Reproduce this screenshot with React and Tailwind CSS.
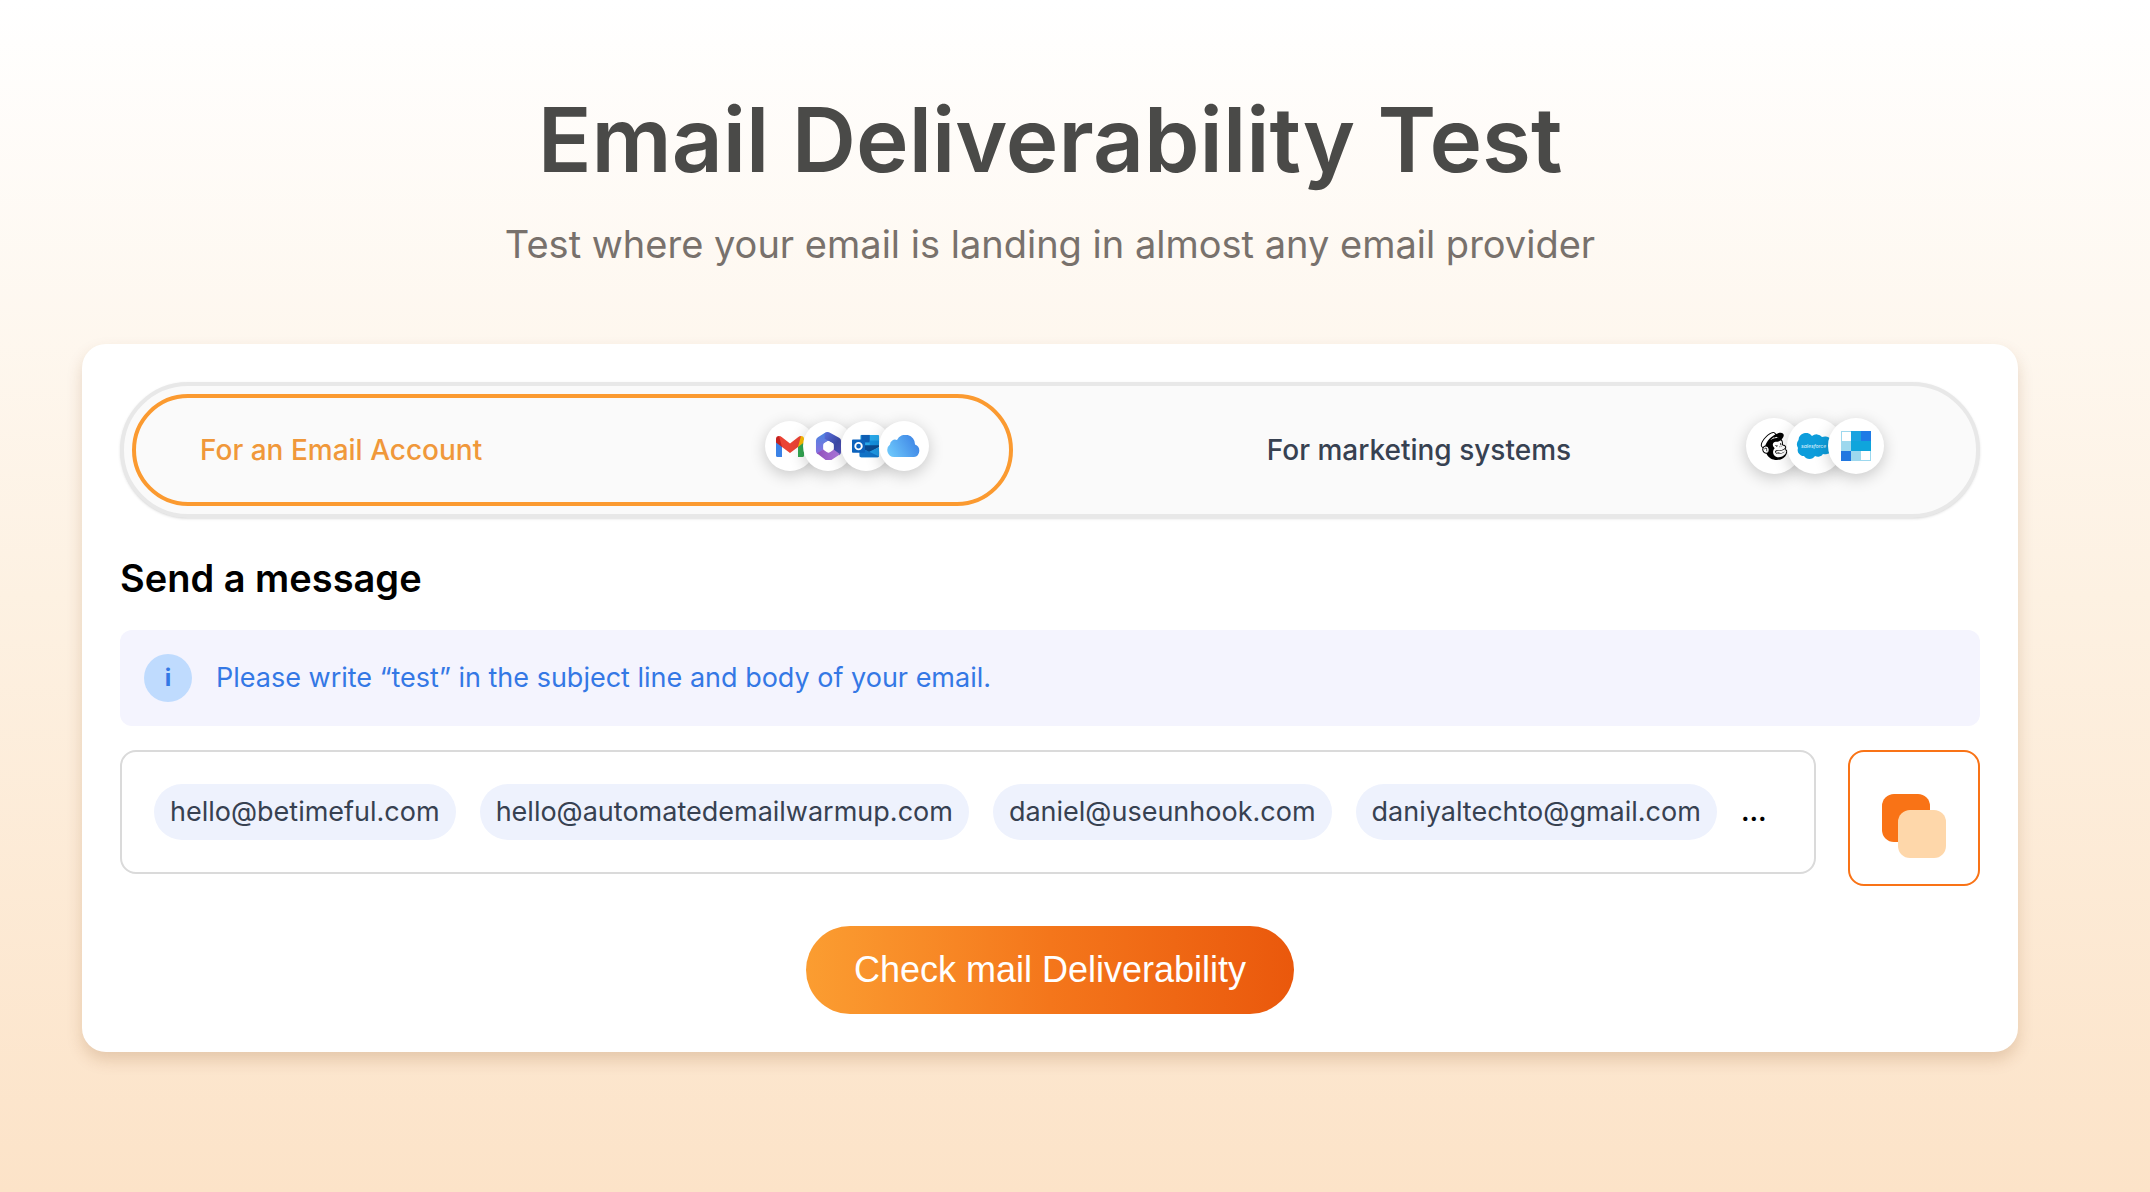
import { useState } from 'react';
import { FaMailchimp } from 'react-icons/fa';

const emails = [
  'hello@betimeful.com',
  'hello@automatedemailwarmup.com',
  'daniel@useunhook.com',
  'daniyaltechto@gmail.com',
];

function GmailLogo() {
  return (
    <svg viewBox="0 0 28 21" className="w-7" aria-hidden="true">
      <path fill="#3b82e6" d="M0 3v16.500q0 1.500 1.500 1.500H6V7z" />
      <path fill="#34a853" d="M28 3v16.500q0 1.500-1.500 1.500H22V7z" />
      <path fill="#fbbc04" d="M22 2v9l6-4.500V3q0-3-3-3z" />
      <path fill="#c5221f" d="M6 2v9L0 6.500V3q0-3 3-3z" />
      <path fill="#ea4335" d="M3 0q1.500 0 3 1.200L14 7.500l8-6.300Q23.500 0 25 0L22 11l-8 6-8-6z" />
    </svg>
  );
}

function OfficeLogo() {
  return (
    <svg viewBox="0 0 28 30" className="w-[27px]" aria-hidden="true">
      <defs>
        <linearGradient id="officeTop" x1="0" y1="0" x2="1" y2="1">
          <stop offset="0" stopColor="#5a6fdc" />
          <stop offset="0.600" stopColor="#3c4aa8" />
          <stop offset="1" stopColor="#5a55c0" />
        </linearGradient>
        <linearGradient id="officeLeft" x1="0" y1="0" x2="0" y2="1">
          <stop offset="0" stopColor="#4a86e0" />
          <stop offset="1" stopColor="#8a6fe0" />
        </linearGradient>
        <linearGradient id="officeBottom" x1="0" y1="0" x2="1" y2="0">
          <stop offset="0" stopColor="#8f4fb8" />
          <stop offset="1" stopColor="#b07be0" />
        </linearGradient>
      </defs>
      <path fill="url(#officeLeft)" d="M14 1Q12 0 10 1L3 5.500Q1 7 1 9v11q0 2 2 3l6-5v-6l8-5z" />
      <path fill="url(#officeTop)" d="M10 1q3-2 6 0l9 5q2 1 2 3v12q0 2-2 3l-6-5v-7l-9-5z" />
      <path fill="url(#officeBottom)" d="M2 22l7-4 5 3 5-3 7 5-9 6q-3 2-6 0z" />
      <path fill="#fff" d="M12.500 10q1.500-1 3 0l3 2q1 .7 1 2v3q0 1.200-1 2l-3 2q-1.500 1-3 0l-3-2q-1-.8-1-2v-3q0-1.300 1-2z" />
    </svg>
  );
}

function OutlookLogo() {
  return (
    <svg viewBox="0 0 30 26" className="w-7" aria-hidden="true">
      <rect x="9" y="1" width="20" height="13" rx="1" fill="#28a8ea" />
      <path fill="#0f5fb4" d="M10 1h9v8h-9z" />
      <path fill="#1490df" d="M19 7h10v7H19z" />
      <path fill="#0a4a90" d="M8 12h21v2l-10 6-11-6z" />
      <path fill="#1f9ae6" d="M8 24l21-10v9q0 2-2 2H10z" />
      <path fill="#1173c7" d="M8 14l21 10q-1 1-2 1H10q-2 0-2-2z" />
      <rect y="6" width="14" height="14" rx="1" fill="#0d63bd" />
      <circle cx="7" cy="13" r="3.500" fill="none" stroke="#fff" strokeWidth="2" />
    </svg>
  );
}

function CloudLogo() {
  return (
    <svg viewBox="0 0 34 22" className="w-[34px]" aria-hidden="true">
      <defs>
        <linearGradient id="cloudFill" x1="0" y1="0.700" x2="1" y2="0.300">
          <stop offset="0" stopColor="#6cc6fb" />
          <stop offset="1" stopColor="#3c82e4" />
        </linearGradient>
      </defs>
      <path
        fill="url(#cloudFill)"
        d="M7 22a7 7 0 0 1-4-12.500A5 5 0 0 1 10 5a9.500 9.500 0 0 1 18 4.500A6.500 6.500 0 0 1 27 22z"
      />
    </svg>
  );
}

function MailchimpLogo() {
  return <FaMailchimp className="size-8 text-black" aria-hidden="true" />;
}

function SalesforceLogo() {
  return (
    <svg viewBox="0 0 38 27" className="w-[38px]" aria-hidden="true">
      <path
        fill="#0d9ddb"
        d="M16 3a7 7 0 0 1 10 1 8 8 0 0 1 11 8 8 8 0 0 1-10 9 6 6 0 0 1-8 2 6.500 6.500 0 0 1-11 0A6 6 0 0 1 2 15 7 7 0 0 1 2.500 7 7.500 7.500 0 0 1 16 3z"
      />
      <text x="5" y="15" fontSize="5" fontStyle="italic" fill="#d8f0fb" fontFamily="Inter, sans-serif">
        salesforce
      </text>
    </svg>
  );
}

function SendgridLogo() {
  return (
    <svg viewBox="0 0 30 30" className="w-[30px]" aria-hidden="true">
      <rect width="30" height="30" fill="#9dd8ee" />
      <path fill="#fff" d="M1 1h9v9H1zM20 20h9v9h-9z" />
      <path fill="#1aa3e0" d="M10 0h10v10H10z" />
      <path fill="#1f7be6" d="M20 0h10v10H20z" />
      <path fill="#0fa5dc" d="M10 10h20v10H10z" />
      <path fill="#2077e0" d="M0 20h10v10H0z" />
    </svg>
  );
}

function LogoStack({ logos, itemClass }) {
  return (
    <span className="flex pb-2">
      {logos.map((Logo, index) => (
        <span
          key={index}
          className={`flex shrink-0 items-center justify-center rounded-full bg-white shadow-[0_4px_16px_rgba(0,0,0,0.2)] ${itemClass}`}
        >
          <Logo />
        </span>
      ))}
    </span>
  );
}

const tabs = [
  {
    id: 'account',
    label: 'For an Email Account',
    logos: [GmailLogo, OfficeLogo, OutlookLogo, CloudLogo],
    padding: 'pl-16',
    itemClass: 'size-[50px] not-first:-ml-3',
  },
  {
    id: 'marketing',
    label: 'For marketing systems',
    logos: [MailchimpLogo, SalesforceLogo, SendgridLogo],
    padding: 'pl-44',
    itemClass: 'size-14 not-first:-ml-[15px]',
  },
];

function App() {
  const [active, setActive] = useState('account');

  return (
    <main className="min-h-screen bg-linear-to-b from-white via-[#fdf1e2] to-[#fce3c8] pt-24 pr-[132px] pb-[140px] pl-[82px] font-['Inter',sans-serif]">
      <header className="text-center">
        <h1 className="text-[89px] leading-[88px] font-semibold text-[#4a4a48]">Email Deliverability Test</h1>
        <p className="mt-9 text-[38px] leading-[48px] text-[#78716c]">
          Test where your email is landing in almost any email provider
        </p>
      </header>

      <section className="mt-[76px] rounded-3xl bg-white p-[38px] shadow-[0_8px_16px_rgba(120,60,10,0.18)]">
        {/* Account type */}
        <div className="flex justify-between rounded-full border-4 border-[#e8e8e8] bg-[#fafafa] p-2 shadow-sm">
          {tabs.map((tab) => (
            <button
              key={tab.id}
              type="button"
              aria-pressed={active === tab.id}
              onClick={() => setActive(tab.id)}
              className={`flex h-28 w-[48%] items-center justify-between rounded-full border-4 pr-20 text-[28px] leading-10 font-medium ${tab.padding} ${
                active === tab.id ? 'border-[#fb9a30] text-[#f0983a]' : 'border-transparent text-[#374151]'
              }`}
            >
              {tab.label}
              <LogoStack logos={tab.logos} itemClass={tab.itemClass} />
            </button>
          ))}
        </div>

        <h2 className="mt-9 text-[38px] leading-[48px] font-semibold text-black">Send a message</h2>

        <div className="mt-7 flex h-24 items-center gap-6 rounded-xl bg-[#f4f4fe] px-6 text-[27px] text-[#3478e5]">
          <span className="flex size-12 items-center justify-center rounded-full bg-[#bfdbfe] text-2xl font-bold">i</span>
          <p>Please write “test” in the subject line and body of your email.</p>
        </div>

        {/* Recipients */}
        <div className="mt-6 flex items-start gap-8">
          <ul className="flex min-w-0 flex-1 items-center gap-6 rounded-2xl border-2 border-[#dadada] p-8 text-[27px]">
            {emails.map((email) => (
              <li key={email} className="flex h-14 items-center rounded-full bg-[#eef2fd] px-4 text-[#374151]">
                {email}
              </li>
            ))}
            <li className="font-semibold text-black">...</li>
          </ul>
          <button
            type="button"
            aria-label="Copy emails"
            className="flex h-34 w-[132px] shrink-0 items-center justify-center rounded-2xl border-2 border-[#f97316] pt-4"
          >
            <svg viewBox="0 0 64 64" className="size-16" aria-hidden="true">
              <rect width="48" height="48" rx="12" fill="#f97316" />
              <rect x="16" y="16" width="48" height="48" rx="12" fill="#fed7aa" />
            </svg>
          </button>
        </div>

        <button
          type="button"
          className="mx-auto mt-10 block h-22 rounded-full bg-linear-to-r from-[#fb9d31] via-[#f4761b] to-[#ea580c] px-12 font-['Liberation_Sans',sans-serif] text-4xl text-white"
        >
          Check mail Deliverability
        </button>
      </section>
    </main>
  );
}

export default App;
